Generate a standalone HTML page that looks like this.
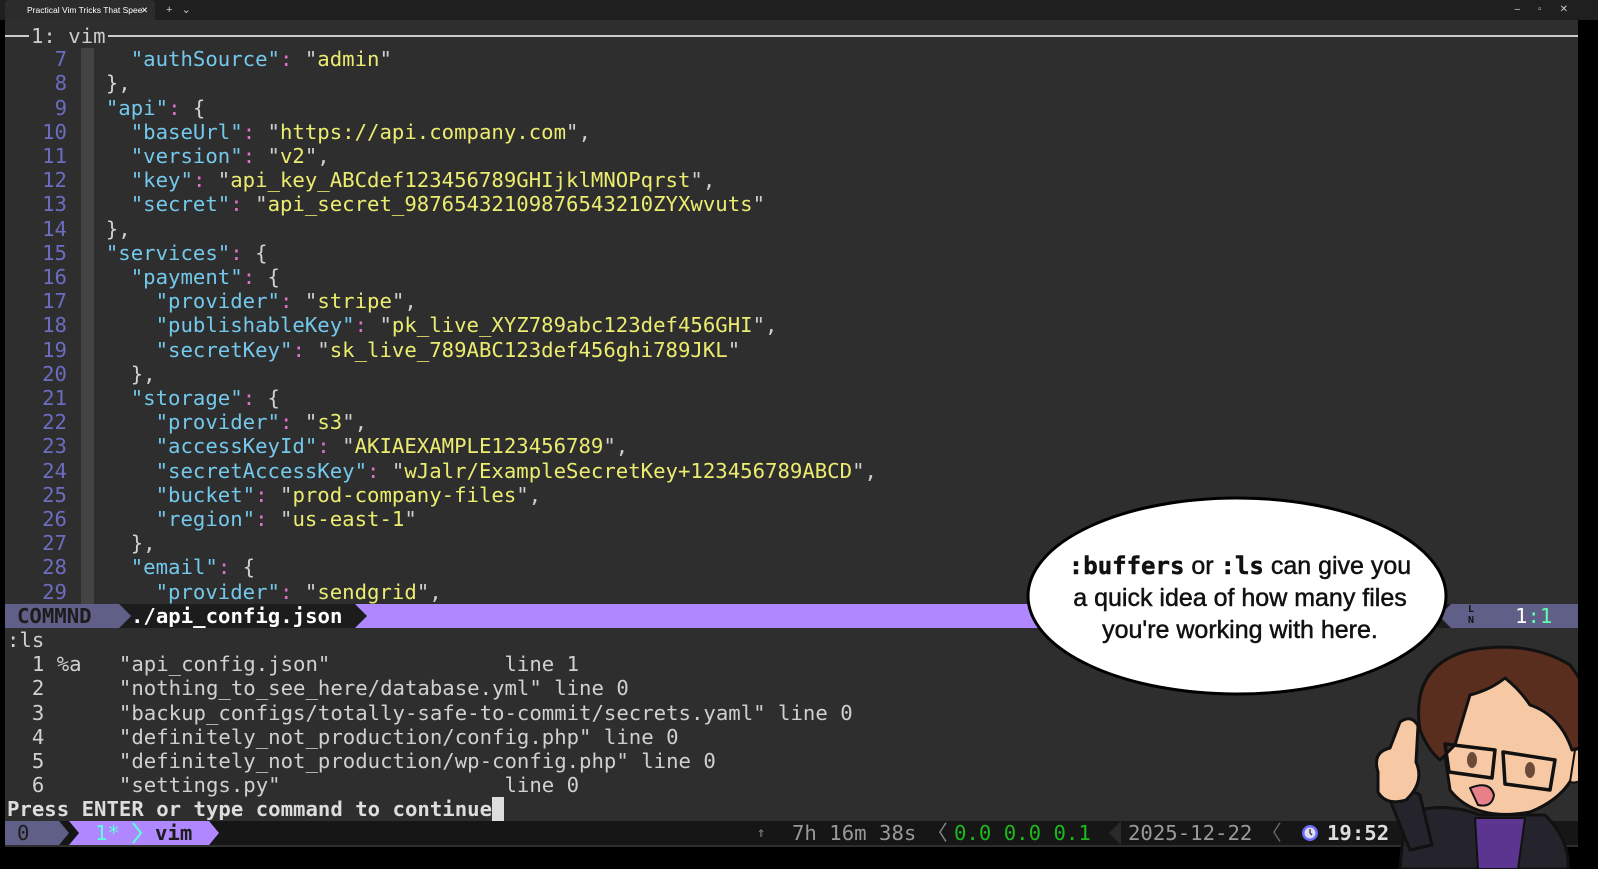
<!DOCTYPE html>
<html><head><meta charset="utf-8"><style>
*{margin:0;padding:0;box-sizing:border-box}
body{width:1598px;height:869px;background:#000;overflow:hidden;position:relative;font-family:"DejaVu Sans Mono","Liberation Mono",monospace;font-size:20.66px;color:#d0d0d0}
.tabbar{position:absolute;left:0;top:0;width:1598px;height:20px;background:#1f1f1f}
.tab{position:absolute;left:5px;top:0;width:150px;height:20px;background:#2c2c2c;border-radius:4px 4px 0 0;font:8.5px "Liberation Sans",sans-serif;color:#fff;line-height:20px;padding-left:22px}
.term{position:absolute;left:5px;top:20px;width:1573px;height:827px;background:#2e2e2e}
.r{position:absolute;left:0;height:24px;line-height:24px;white-space:pre}
.ln{position:absolute;width:62px;text-align:right;color:#6c6cc0;white-space:pre}
.k{color:#74c8ec}.s{color:#ecec70}.c{color:#e070c8}
.gut{position:absolute;left:76px;top:28px;width:13px;height:580px;background:#444}
b{font-weight:bold}
</style></head><body>
<div class="tabbar"><div class="tab">Practical Vim Tricks That Spee <span style="position:absolute;left:136px">✕</span></div>
<span style="position:absolute;left:166px;top:0;color:#ccc;font:11px 'Liberation Sans';line-height:20px">+ &nbsp; ⌄</span>
<span style="position:absolute;right:12px;top:0;color:#ccc;font:10px 'Liberation Sans';line-height:20px;letter-spacing:18px">–▫✕</span></div>
<div class="term">
<div style="position:absolute;left:0;top:15px;width:1573px;height:2px;background:#ccc"></div>
<div class="r" style="top:4px;left:24px;background:#2e2e2e;padding:0 2px;color:#ccc">1: vim</div>
<div class="gut"></div>
<div id="code"></div>
<div style="position:absolute;left:0;top:584px;width:1573px;height:24px;background:#af87ff"></div>
<div style="position:absolute;left:0;top:584px;width:114px;height:24px;background:#5f5f87"></div>
<svg style="position:absolute;left:0;top:584px" width="370" height="24"><polygon points="114,0 126,12 114,24" fill="#5f5f87"/><polygon points="114,0 350,0 362,12 350,24 114,24 126,12" fill="#1c1c1c"/></svg>
<div class="r" style="top:584px;left:12px;color:#1c1c1c;font-weight:bold">COMMND</div>
<div class="r" style="top:584px;left:126px;color:#fff;font-weight:bold">./api_config.json</div>
<svg style="position:absolute;left:1418px;top:584px" width="155" height="24"><rect x="0" y="0" width="155" height="24" fill="#5f5f87"/><polygon points="0,0 14,0 14,24 0,24" fill="#af87ff"/><polygon points="14,0 28,0 28,24 14,24 2,12" fill="#1c1c1c"/><polygon points="28,0 28,24 16,12" fill="#5f5f87"/></svg>
<div style="position:absolute;left:1463px;top:584px;font-size:10px;line-height:11px;color:#111;font-weight:bold">L<br>N</div>
<div class="r" style="top:584px;left:1510px;color:#fff">1<span style="color:#5fffaf">:1</span></div>
<div id="ls"></div>
<div style="position:absolute;left:0;top:801px;width:1573px;height:24px;background:#161616"></div>
<svg style="position:absolute;left:0;top:801px" width="230" height="24"><polygon points="0,0 54,0 64,12 54,24 0,24" fill="#5f5f87"/><polygon points="64,0 204,0 214,12 204,24 64,24 74,12" fill="#af87ff"/><polyline points="128,2 136,12 128,22" stroke="#5fffd7" stroke-width="2" fill="none"/></svg>
<div class="r" style="top:801px;left:12px;color:#1c1c1c">0</div>
<div class="r" style="top:801px;left:90px;color:#5fffd7">1*</div>
<div class="r" style="top:801px;left:150px;color:#1c1c1c;font-weight:bold">vim</div>
<div class="r" style="top:801px;left:752px;color:#999;font-size:14px">⇑</div>
<div class="r" style="top:801px;left:787px;color:#999">7h 16m 38s</div>
<div class="r" style="top:801px;left:922px;color:#888">〈</div>
<div class="r" style="top:801px;left:949px;color:#1cb81c">0.0 0.0 0.1</div>
<svg style="position:absolute;left:1102px;top:801px" width="20" height="24"><polygon points="14,0 14,24 2,12" fill="#2a2a2a"/></svg>
<div class="r" style="top:801px;left:1123px;color:#999">2025-12-22</div>
<div class="r" style="top:801px;left:1256px;color:#666">〈</div>
<svg style="position:absolute;left:1296px;top:804px" width="18" height="18"><circle cx="9" cy="9" r="8" fill="#6a6aff"/><circle cx="9" cy="9" r="5.5" fill="#dde"/><path d="M9,5V9L11,11" stroke="#333" stroke-width="1.3" fill="none"/></svg>
<div class="r" style="top:801px;left:1322px;color:#ddd;font-weight:bold">19:52</div>
<div style="position:absolute;left:1500px;top:801px;width:30px;height:24px;background:#d0d0d0;color:#111;font-weight:bold;line-height:24px">ck</div>
</div>
<svg style="position:absolute;left:0;top:0" width="1598" height="869">
<ellipse cx="1237" cy="596" rx="209" ry="98" fill="#fff" stroke="#000" stroke-width="3"/>
<g font-family="Liberation Sans" font-size="25" fill="#111" stroke="#111" stroke-width=".5" text-anchor="middle">
<text x="1240" y="574"><tspan font-family="DejaVu Sans Mono" font-weight="bold" font-size="24">:buffers</tspan> or <tspan font-family="DejaVu Sans Mono" font-weight="bold" font-size="24">:ls</tspan> can give you</text>
<text x="1240" y="606">a quick idea of how many files</text>
<text x="1240" y="638">you're working with here.</text>
</g>
<g stroke="#111" stroke-width="3" stroke-linejoin="round">
<path d="M1400,869 L1405,815 Q1440,800 1480,815 L1545,815 Q1570,840 1568,869 Z" fill="#25232b"/>
<path d="M1475,818 L1525,818 L1518,869 L1478,869 Z" fill="#5b3590" stroke-width="2"/>
<path d="M1390,800 Q1405,785 1420,795 L1432,845 L1410,850 Z" fill="#25232b"/>
<path d="M1440,720 Q1450,680 1510,672 Q1570,675 1580,735 Q1585,790 1530,812 Q1475,822 1450,790 Z" fill="#f6c8a4"/>
<path d="M1575,750 Q1592,745 1588,770 Q1582,785 1570,782 Z" fill="#f6c8a4" stroke-width="2"/>
<path d="M1420,730 Q1410,665 1470,650 Q1530,640 1570,665 Q1598,700 1590,745 L1572,750 Q1560,715 1530,705 Q1520,690 1505,678 Q1490,690 1470,695 L1455,745 L1440,760 Q1428,750 1420,730 Z" fill="#5a2e1e"/>
<path d="M1445,744 L1495,750 L1492,778 L1449,772 Z M1503,752 L1555,760 L1550,790 L1505,784 Z" fill="none" stroke-width="3.5"/>
<ellipse cx="1472" cy="760" rx="5" ry="8" fill="#6b4a3a" stroke="none"/><ellipse cx="1530" cy="770" rx="5" ry="8" fill="#6b4a3a" stroke="none"/>
<path d="M1470,788 Q1490,780 1494,795 Q1492,808 1478,805 Z" fill="#e8808a" stroke-width="2"/>
<path d="M1378,772 Q1372,752 1390,748 L1400,722 Q1412,714 1418,726 L1416,762 Q1425,782 1406,800 Q1386,806 1378,792 Z" fill="#f6c8a4"/>
</g>
<rect x="1578" y="20" width="20" height="849" fill="#000"/>
</svg>
<script>
const R=24.2,T=3;
const L=[
[7,'    "<k>authSource</k>"<c>:</c> "<s>admin</s>"'],
[8,'  },'],[9,'  "<k>api</k>"<c>:</c> {'],
[10,'    "<k>baseUrl</k>"<c>:</c> "<s>https://api.company.com</s>",'],
[11,'    "<k>version</k>"<c>:</c> "<s>v2</s>",'],
[12,'    "<k>key</k>"<c>:</c> "<s>api_key_ABCdef123456789GHIjklMNOPqrst</s>",'],
[13,'    "<k>secret</k>"<c>:</c> "<s>api_secret_98765432109876543210ZYXwvuts</s>"'],
[14,'  },'],[15,'  "<k>services</k>"<c>:</c> {'],
[16,'    "<k>payment</k>"<c>:</c> {'],
[17,'      "<k>provider</k>"<c>:</c> "<s>stripe</s>",'],
[18,'      "<k>publishableKey</k>"<c>:</c> "<s>pk_live_XYZ789abc123def456GHI</s>",'],
[19,'      "<k>secretKey</k>"<c>:</c> "<s>sk_live_789ABC123def456ghi789JKL</s>"'],
[20,'    },'],[21,'    "<k>storage</k>"<c>:</c> {'],
[22,'      "<k>provider</k>"<c>:</c> "<s>s3</s>",'],
[23,'      "<k>accessKeyId</k>"<c>:</c> "<s>AKIAEXAMPLE123456789</s>",'],
[24,'      "<k>secretAccessKey</k>"<c>:</c> "<s>wJalr/ExampleSecretKey+123456789ABCD</s>",'],
[25,'      "<k>bucket</k>"<c>:</c> "<s>prod-company-files</s>",'],
[26,'      "<k>region</k>"<c>:</c> "<s>us-east-1</s>"'],
[27,'    },'],[28,'    "<k>email</k>"<c>:</c> {'],
[29,'      "<k>provider</k>"<c>:</c> "<s>sendgrid</s>",']];
let h='';
L.forEach((l,i)=>{const t=T+R*(i+1);
h+=`<div class="ln" style="top:${t}px;left:0;line-height:24px">${l[0]}</div>`;
h+=`<div class="r" style="top:${t}px;left:76px">${l[1].replace(/<k>/g,'<span class="k">').replace(/<s>/g,'<span class="s">').replace(/<c>/g,'<span class="c">').replace(/<\/[ksc]>/g,'</span>').replace(/"<span class="k">([^<]*)<\/span>"/g,'<span class="k">"$1"</span>')}</div>`;});
document.getElementById('code').innerHTML=h;
const S=[':ls',
'  1 %a   "api_config.json"              line 1',
'  2      "nothing_to_see_here/database.yml" line 0',
'  3      "backup_configs/totally-safe-to-commit/secrets.yaml" line 0',
'  4      "definitely_not_production/config.php" line 0',
'  5      "definitely_not_production/wp-config.php" line 0',
'  6      "settings.py"                  line 0'];
let g='';S.forEach((s,i)=>{g+=`<div class="r" style="top:${T+R*(25+i)}px;left:2px">${s}</div>`});
g+=`<div class="r" style="top:${T+R*32}px;left:2px;font-weight:bold;color:#ddd">Press ENTER or type command to continue<span style="background:#ddd">&nbsp;</span></div>`;
document.getElementById('ls').innerHTML=g;
</script>
</body></html>
